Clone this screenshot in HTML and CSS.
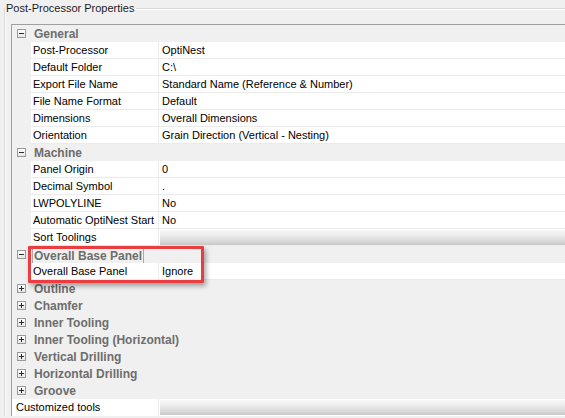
FILE: index.html
```html
<!DOCTYPE html>
<html>
<head>
<meta charset="utf-8">
<title>Post-Processor Properties</title>
<link rel="stylesheet" href="styles.css">
</head>
<body>
<fieldset class="group">
  <legend class="group-title">Post-Processor Properties</legend>
  <div class="grid">
    <div class="row cat"><span class="gutter"><span class="toggle minus"></span></span><span class="cat-name">General</span></div>
    <div class="row prop"><span class="gutter"></span><span class="label">Post-Processor</span><span class="value">OptiNest</span></div>
    <div class="row prop"><span class="gutter"></span><span class="label">Default Folder</span><span class="value">C:\</span></div>
    <div class="row prop"><span class="gutter"></span><span class="label">Export File Name</span><span class="value">Standard Name (Reference &amp; Number)</span></div>
    <div class="row prop"><span class="gutter"></span><span class="label">File Name Format</span><span class="value">Default</span></div>
    <div class="row prop"><span class="gutter"></span><span class="label">Dimensions</span><span class="value">Overall Dimensions</span></div>
    <div class="row prop"><span class="gutter"></span><span class="label">Orientation</span><span class="value">Grain Direction (Vertical - Nesting)</span></div>
    <div class="row cat"><span class="gutter"><span class="toggle minus"></span></span><span class="cat-name">Machine</span></div>
    <div class="row prop"><span class="gutter"></span><span class="label">Panel Origin</span><span class="value">0</span></div>
    <div class="row prop"><span class="gutter"></span><span class="label">Decimal Symbol</span><span class="value">.</span></div>
    <div class="row prop"><span class="gutter"></span><span class="label">LWPOLYLINE</span><span class="value">No</span></div>
    <div class="row prop"><span class="gutter"></span><span class="label">Automatic OptiNest Start</span><span class="value">No</span></div>
    <div class="row prop"><span class="gutter"></span><span class="label">Sort Toolings</span><span class="value"><span class="button"></span></span></div>
    <div class="row cat"><span class="gutter"><span class="toggle minus"></span></span><span class="cat-name focused">Overall Base Panel</span></div>
    <div class="row prop"><span class="gutter"></span><span class="label">Overall Base Panel</span><span class="value">Ignore</span></div>
    <div class="row cat"><span class="gutter"><span class="toggle plus"></span></span><span class="cat-name">Outline</span></div>
    <div class="row cat"><span class="gutter"><span class="toggle plus"></span></span><span class="cat-name">Chamfer</span></div>
    <div class="row cat"><span class="gutter"><span class="toggle plus"></span></span><span class="cat-name">Inner Tooling</span></div>
    <div class="row cat"><span class="gutter"><span class="toggle plus"></span></span><span class="cat-name">Inner Tooling (Horizontal)</span></div>
    <div class="row cat"><span class="gutter"><span class="toggle plus"></span></span><span class="cat-name">Vertical Drilling</span></div>
    <div class="row cat"><span class="gutter"><span class="toggle plus"></span></span><span class="cat-name">Horizontal Drilling</span></div>
    <div class="row cat"><span class="gutter"><span class="toggle plus"></span></span><span class="cat-name">Groove</span></div>
    <div class="row tools"><span class="label wide">Customized tools</span><span class="value"><span class="button"></span></span></div>
    <div class="highlight"></div>
  </div>
</fieldset>
</body>
</html>
```

FILE: styles.css
```css
html, body {
  margin: 0;
  width: 565px;
  height: 418px;
  overflow: hidden;
  background: #f0f0f0;
  font-family: "Liberation Sans", Arial, sans-serif;
  font-size: 11px;
  color: #000;
}

.group {
  margin: 0 0 0 4px;
  padding: 0;
  width: 561px;
  min-inline-size: 0;
  box-sizing: border-box;
  border: 1px solid #d9d9d9;
  border-right: 0;
  border-bottom: 0;
  box-shadow: inset 1px 1px 0 #fbfbfb;
}

.group-title {
  padding: 0 2px 0 1px;
  line-height: 17px;
  color: #1a1a1a;
}

.grid {
  position: relative;
  margin: 7px 0 0 6px;
  border: 1px solid #a0a0a0;
  border-right: 0;
  border-bottom: 0;
  background: #f0f0f0;
}

.row {
  display: grid;
  grid-template-columns: 19px 128px 1fr;
  height: 17px;
  line-height: 15px;
}

.gutter {
  display: flex;
  align-items: center;
  justify-content: center;
  height: 17px;
  background: #f0f0f0;
}

.toggle {
  position: relative;
  width: 9px;
  height: 9px;
  box-sizing: border-box;
  border: 1px solid #9a9a9a;
  background: linear-gradient(#ffffff, #e6e6e6);
}

.toggle::before {
  content: "";
  position: absolute;
  left: 1px;
  top: 3px;
  width: 5px;
  height: 1px;
  background: #2b2b2b;
}

.toggle.plus::after {
  content: "";
  position: absolute;
  left: 3px;
  top: 1px;
  width: 1px;
  height: 5px;
  background: #2b2b2b;
}

.cat-name {
  grid-column: 2 / 4;
  padding: 1px 0 0 3px;
  font-size: 12px;
  font-weight: bold;
  color: #6d6d6d;
  line-height: 16px;
}

.cat-name.focused {
  justify-self: start;
  align-self: start;
  margin: 2px 0 0 1px;
  padding: 0 1px;
  border: 1px solid #a9a9a9;
  line-height: 14px;
}

.label {
  padding: 1px 0 0 2px;
  background: #fff;
  border-bottom: 1px solid #ebebeb;
  border-right: 1px solid #ebebeb;
  white-space: nowrap;
  overflow: hidden;
}

.value {
  display: flex;
  padding: 1px 0 0 3px;
  background: #fff;
  border-bottom: 1px solid #ebebeb;
  white-space: nowrap;
  overflow: hidden;
}

.tools .label.wide {
  grid-column: 1 / 3;
  padding-left: 4px;
}

.tools .label, .tools .value {
  border-bottom-color: #fff;
}

.button {
  flex: 1;
  margin: 0 0 0 -2px;
  height: 15px;
  background: linear-gradient(#f8f8f8, #ececec 35%, #d6d6d6 80%, #c8c8c8);
}

.highlight {
  position: absolute;
  left: 16px;
  top: 221px;
  width: 176px;
  height: 37px;
  box-sizing: border-box;
  border: 3px solid #ea3d40;
  border-radius: 1px;
  box-shadow: 2px 3px 5px rgba(0, 0, 0, 0.35);
}
```
